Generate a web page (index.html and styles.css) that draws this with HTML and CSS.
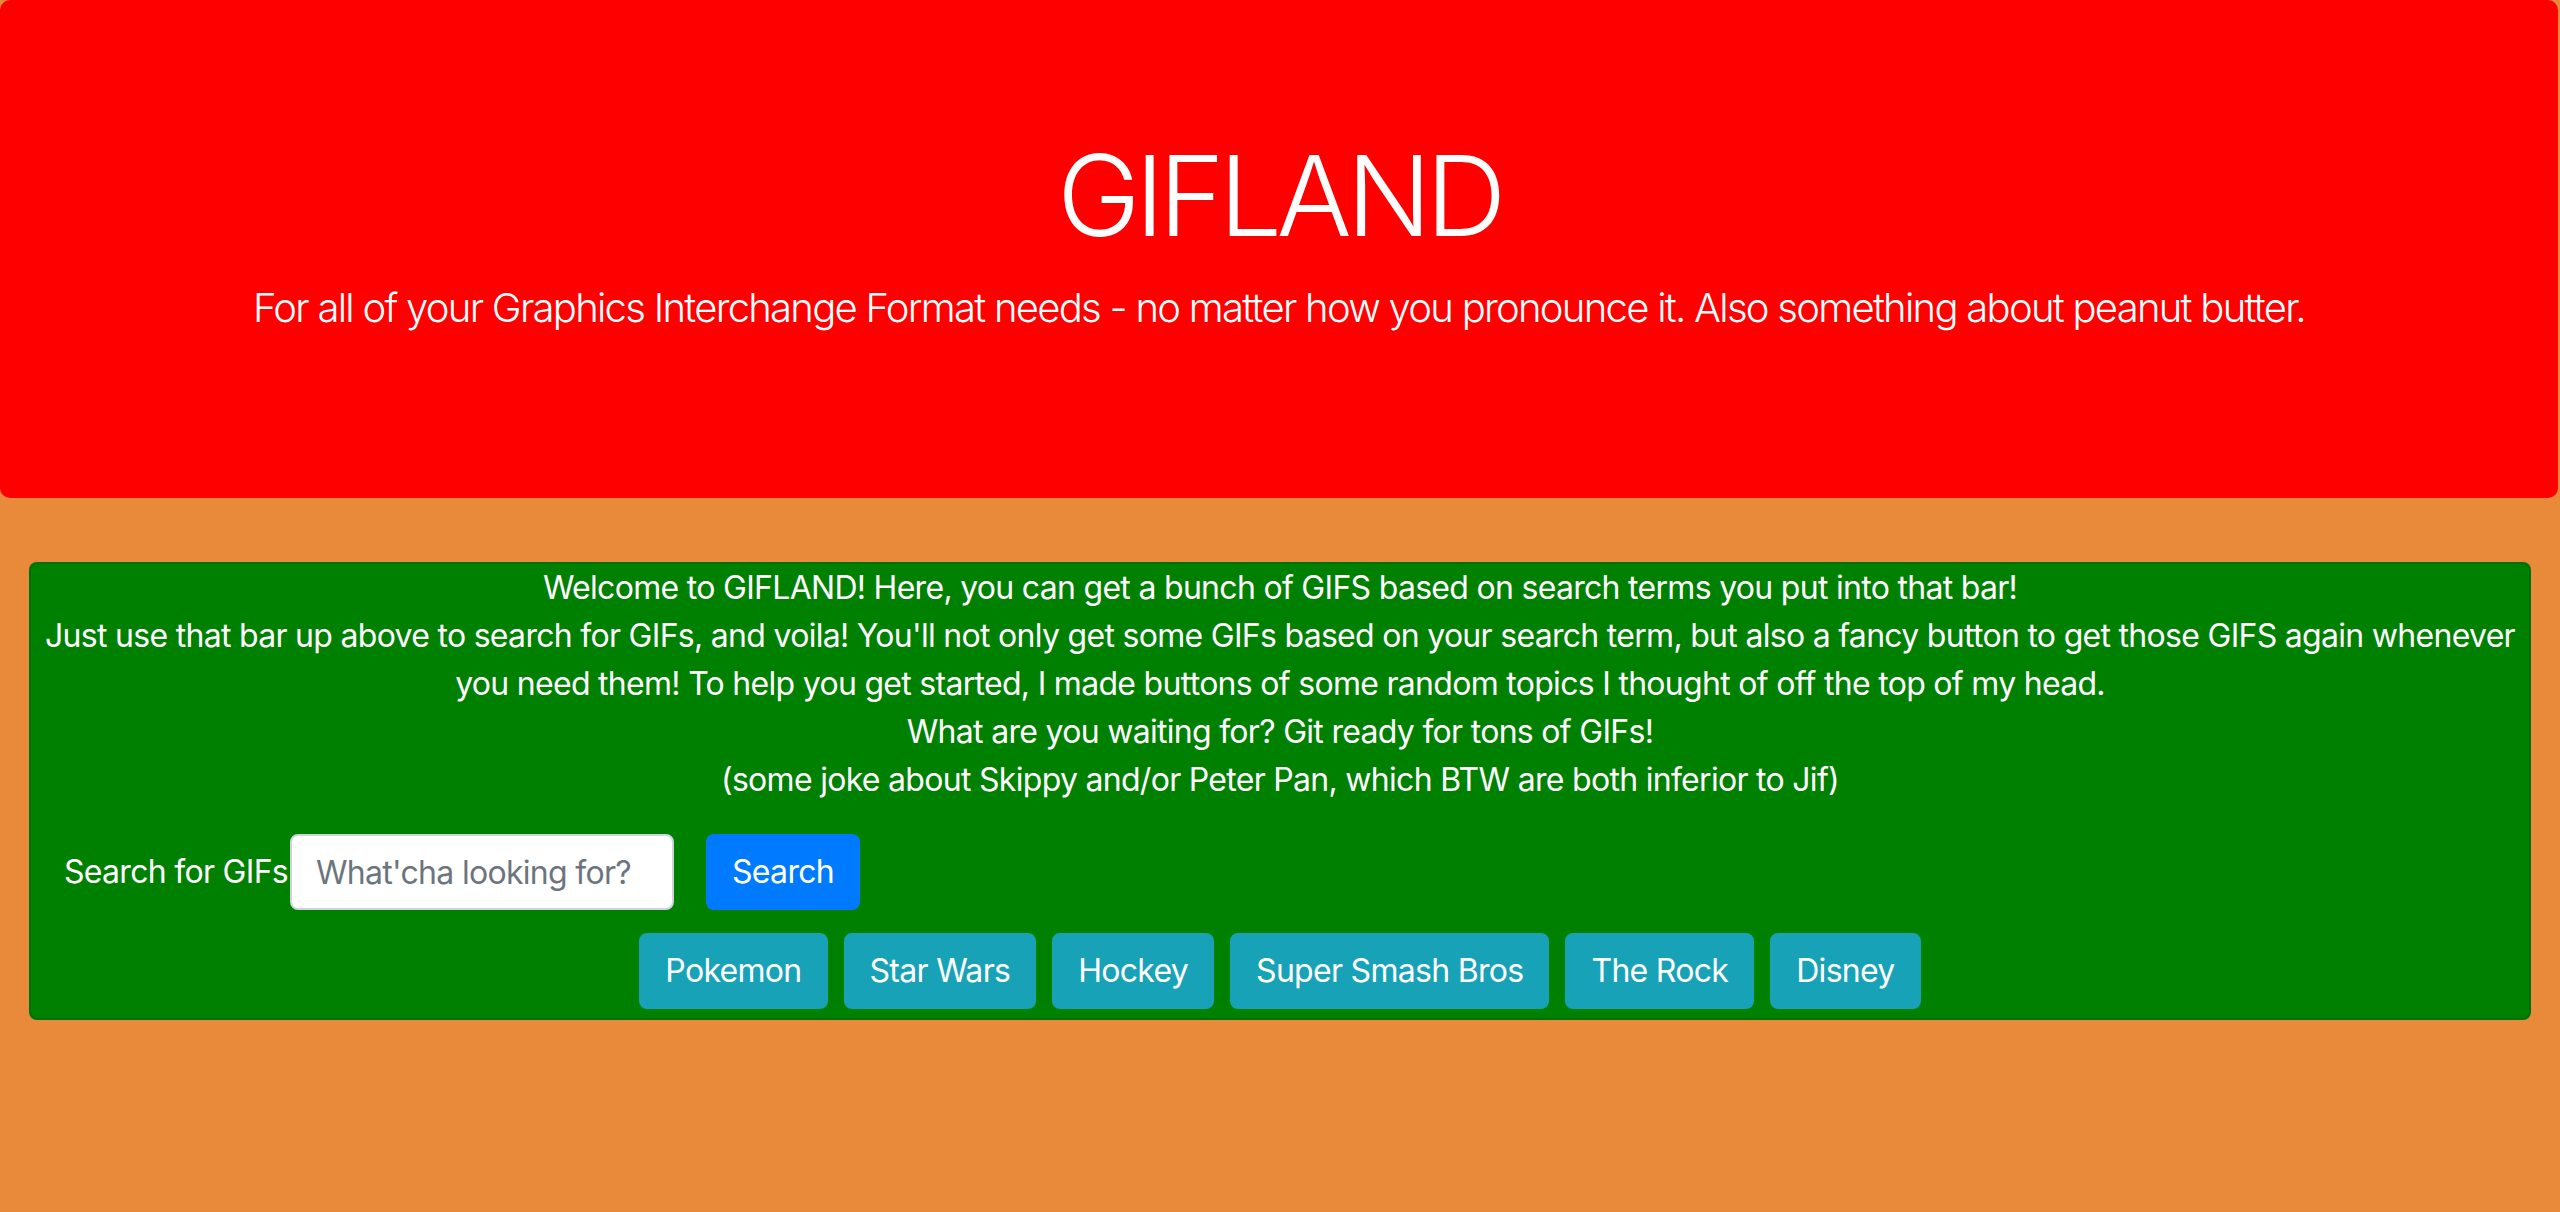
FILE: index.html
```html
<!DOCTYPE html>
<html lang="en">
<head>
<meta charset="utf-8">
<title>GIFLAND</title>
<link rel="stylesheet" href="styles.css">
</head>
<body>
<header class="jumbotron">
  <h1 class="display">GIFLAND</h1>
  <p class="lead">For all of your Graphics Interchange Format needs - no matter how you pronounce it. Also something about peanut butter.</p>
</header>
<main class="container">
  <section class="card">
    <p class="line">Welcome to GIFLAND! Here, you can get a bunch of GIFS based on search terms you put into that bar!</p>
    <p class="line">Just use that bar up above to search for GIFs, and voila! You'll not only get some GIFs based on your search term, but also a fancy button to get those GIFS again whenever<br>you need them! To help you get started, I made buttons of some random topics I thought of off the top of my head.</p>
    <p class="line">What are you waiting for? Git ready for tons of GIFs!</p>
    <p class="line">(some joke about Skippy and/or Peter Pan, which BTW are both inferior to Jif)</p>
    <form class="search">
      <label class="search-label" for="q">Search for GIFs</label>
      <input class="search-input" id="q" type="text" placeholder="What'cha looking for?">
      <button class="btn btn-primary" type="button">Search</button>
    </form>
    <div class="topics">
      <button class="btn btn-info" type="button">Pokemon</button>
      <button class="btn btn-info" type="button">Star Wars</button>
      <button class="btn btn-info" type="button">Hockey</button>
      <button class="btn btn-info" type="button">Super Smash Bros</button>
      <button class="btn btn-info" type="button">The Rock</button>
      <button class="btn btn-info" type="button">Disney</button>
    </div>
  </section>
</main>
</body>
</html>
```
FILE: styles.css
```css
* { box-sizing: border-box; }
html, body { margin: 0; padding: 0; }
body {
  background: #e9893a;
  font-family: Inter, "Liberation Sans", sans-serif;
  font-size: 32px;
  line-height: 48px;
  letter-spacing: -0.022em;
  color: #fff;
  min-height: 1212px;
}
.jumbotron {
  background: #ff0000;
  padding: 128px 64px;
  margin: 0 2px 64px 0;
  border-radius: 10px;
  text-align: center;
}
.display {
  margin: 0 0 16px;
  font-size: 112px;
  font-weight: 300;
  line-height: 1.2;
  letter-spacing: -0.05em;
}
.lead {
  margin: 0 0 32px;
  font-size: 40px;
  font-weight: 300;
  line-height: 60px;
  letter-spacing: -0.043em;
}
.container { padding: 0 29px; }
.card {
  background: #008000;
  border: 2px solid rgba(0,0,0,.125);
  border-radius: 8px;
  padding: 0 0 9px;
  text-align: center;
}
.line { margin: 0; }
.search {
  margin-top: 30px;
  display: flex;
  align-items: center;
  padding-left: 33px;
}
.search-label { color: #fff; }
.search-input {
  margin-left: 2px;
  width: 384px;
  height: 76px;
  padding: 12px 24px;
  border: 2px solid #ced4da;
  border-radius: 8px;
  font: inherit;
  letter-spacing: inherit;
  color: #495057;
  background: #fff;
}
.search-input::placeholder { color: #6c757d; }
.btn {
  font: inherit;
  letter-spacing: inherit;
  color: #fff;
  border: 2px solid transparent;
  border-radius: 8px;
  padding: 12px 24px;
  height: 76px;
}
.btn-primary { background: #007bff; border-color: #007bff; margin-left: 32px; }
.btn-info { background: #17a2b8; border-color: #17a2b8; }
.topics {
  margin-top: 23px;
  display: flex;
  justify-content: center;
  gap: 16px;
}
```
